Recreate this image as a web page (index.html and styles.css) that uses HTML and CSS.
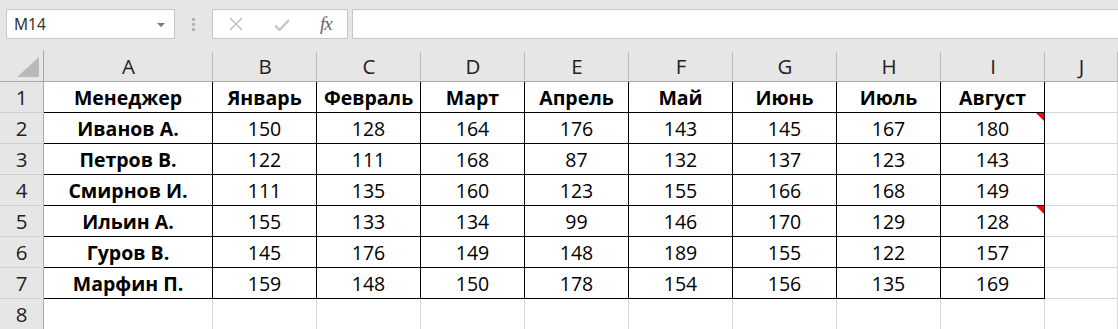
FILE: index.html
```html
<!DOCTYPE html>
<html lang="ru">
<head>
<meta charset="utf-8">
<title>Sheet</title>
<link rel="stylesheet" href="styles.css">
</head>
<body>
<div class="toolbar">
  <div class="namebox"><span class="nb-text">M14</span><span class="caret"></span></div>
  <div class="grip"><i></i><i></i><i></i></div>
  <div class="fbtns">
    <svg class="ico-x" width="14" height="14" viewBox="0 0 14 14"><path d="M1 1 L13 13 M13 1 L1 13" stroke="#c4c4c4" stroke-width="1.6" fill="none"/></svg>
    <svg class="ico-ok" width="16" height="14" viewBox="0 0 16 14"><path d="M1 7.5 L5.5 12 L15 2" stroke="#c4c4c4" stroke-width="2.2" fill="none"/></svg>
    <span class="fx">fx</span>
  </div>
  <div class="finput"></div>
</div>
<div class="sheet">
  <div class="corner"><svg width="24" height="22" viewBox="0 0 24 22"><polygon points="23,1 23,21 1,21" fill="#b9b9b9"/></svg></div>
  <div class="ch">A</div><div class="ch">B</div><div class="ch">C</div><div class="ch">D</div><div class="ch">E</div><div class="ch">F</div><div class="ch">G</div><div class="ch">H</div><div class="ch">I</div><div class="ch">J</div>

  <div class="rh">1</div>
  <div class="c b hd">Менеджер</div><div class="c b hd">Январь</div><div class="c b hd">Февраль</div><div class="c b hd">Март</div><div class="c b hd">Апрель</div><div class="c b hd">Май</div><div class="c b hd">Июнь</div><div class="c b hd">Июль</div><div class="c b hd">Август</div><div class="c"></div>

  <div class="rh">2</div>
  <div class="c b hd">Иванов А.</div><div class="c b">150</div><div class="c b">128</div><div class="c b">164</div><div class="c b">176</div><div class="c b">143</div><div class="c b">145</div><div class="c b">167</div><div class="c b note">180</div><div class="c"></div>

  <div class="rh">3</div>
  <div class="c b hd">Петров В.</div><div class="c b">122</div><div class="c b">111</div><div class="c b">168</div><div class="c b">87</div><div class="c b">132</div><div class="c b">137</div><div class="c b">123</div><div class="c b">143</div><div class="c"></div>

  <div class="rh">4</div>
  <div class="c b hd">Смирнов И.</div><div class="c b">111</div><div class="c b">135</div><div class="c b">160</div><div class="c b">123</div><div class="c b">155</div><div class="c b">166</div><div class="c b">168</div><div class="c b">149</div><div class="c"></div>

  <div class="rh">5</div>
  <div class="c b hd">Ильин А.</div><div class="c b">155</div><div class="c b">133</div><div class="c b">134</div><div class="c b">99</div><div class="c b">146</div><div class="c b">170</div><div class="c b">129</div><div class="c b note">128</div><div class="c"></div>

  <div class="rh">6</div>
  <div class="c b hd">Гуров В.</div><div class="c b">145</div><div class="c b">176</div><div class="c b">149</div><div class="c b">148</div><div class="c b">189</div><div class="c b">155</div><div class="c b">122</div><div class="c b">157</div><div class="c"></div>

  <div class="rh">7</div>
  <div class="c b hd">Марфин П.</div><div class="c b">159</div><div class="c b">148</div><div class="c b">150</div><div class="c b">178</div><div class="c b">154</div><div class="c b">156</div><div class="c b">135</div><div class="c b">169</div><div class="c"></div>

  <div class="rh">8</div>
  <div class="c"></div><div class="c"></div><div class="c"></div><div class="c"></div><div class="c"></div><div class="c"></div><div class="c"></div><div class="c"></div><div class="c"></div><div class="c"></div>
</div>
</body>
</html>
```
FILE: styles.css
```css
* { box-sizing: border-box; }
html, body { margin: 0; padding: 0; }
body {
  background: #e6e6e6;
  width: 1118px;
  height: 329px;
  overflow: hidden;
  font-family: "Open Sans", "Noto Sans", sans-serif;
  color: #000;
}
.toolbar {
  height: 50px;
  display: flex;
  align-items: flex-start;
  padding: 9px 0 0 6px;
}
.namebox {
  width: 169px;
  height: 30px;
  background: #fff;
  border: 1px solid #c6c6c6;
  display: flex;
  align-items: center;
  justify-content: space-between;
  padding: 0 9px 0 7px;
  font-family: "Noto Sans", "Open Sans", sans-serif;
  font-size: 15.5px;
  color: #333;
}
.caret {
  width: 0; height: 0;
  border-left: 4px solid transparent;
  border-right: 4px solid transparent;
  border-top: 4px solid #777;
  margin-top: 1px;
}
.grip {
  width: 37px;
  height: 30px;
  display: flex;
  flex-direction: column;
  align-items: center;
  justify-content: center;
  gap: 2px;
}
.grip i {
  display: block;
  width: 3px; height: 3px;
  background: #b4b4b4;
}
.fbtns {
  width: 136px;
  height: 30px;
  background: #fff;
  border: 1px solid #c6c6c6;
  display: flex;
  align-items: center;
  padding-left: 16px;
}
.ico-x { margin-right: 31px; }
.ico-ok { margin-right: 30px; margin-top: 2px; }
.fx {
  font-family: "Liberation Serif", "DejaVu Serif", serif;
  font-style: italic;
  font-size: 19px;
  color: #666;
  letter-spacing: -1px;
}
.finput {
  flex: 1;
  height: 30px;
  margin-left: 4px;
  margin-right: -3px;
  background: #fff;
  border: 1px solid #c6c6c6;
}
.sheet {
  display: grid;
  grid-template-columns: 44px 169px repeat(8, 104px) 1fr;
  grid-template-rows: 32px repeat(8, 31px);
  font-size: 19.5px;
}
.corner {
  border-right: 1px solid #ababab;
  border-bottom: 1px solid #ababab;
  display: flex;
  align-items: flex-end;
  justify-content: flex-end;
  padding: 0 3px 3px 0;
}
.corner svg { display: block; }
.ch {
  border-bottom: 1px solid #ababab;
  background: linear-gradient(#bcbcbc, #bcbcbc) right bottom / 1px 29px no-repeat;
  display: flex;
  align-items: center;
  justify-content: center;
  padding-top: 1px;
  font-size: 20.5px;
  color: #222;
}
.rh {
  border-right: 1px solid #ababab;
  border-bottom: 1px solid #cfcfcf;
  display: flex;
  align-items: center;
  justify-content: center;
  font-size: 20.5px;
  color: #222;
}
.c {
  background: #fff;
  border-right: 1px solid #d6d6d6;
  border-bottom: 1px solid #d6d6d6;
  display: flex;
  align-items: center;
  justify-content: center;
  white-space: nowrap;
  position: relative;
}
.c.b {
  border-right-color: #000;
  border-bottom-color: #000;
}
.hd { font-weight: 700; }
.note::after {
  content: "";
  position: absolute;
  top: 0;
  right: 0;
  border-top: 8px solid #f00;
  border-left: 8px solid transparent;
}
```
